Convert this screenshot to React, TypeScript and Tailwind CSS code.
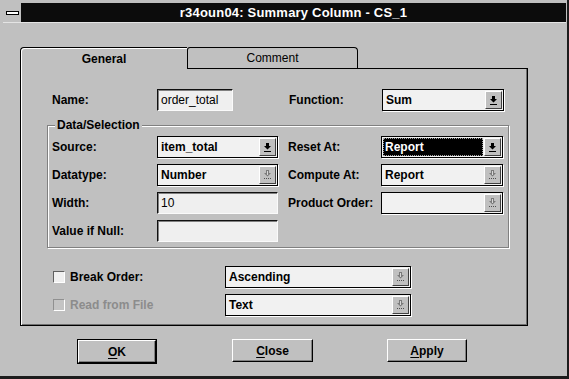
import React from 'react';

// Dropdown arrow glyph; gray + dotted when the combo is disabled
const Arrow: React.FC<{ enabled: boolean }> = ({ enabled }) =>
  enabled ? (
    <svg width="7" height="9" viewBox="0 0 7 9">
      <path d="M2 0h3v3h2L3.5 6.5 0 3h2z" fill="#000" />
      <rect x="0" y="8" width="7" height="1" fill="#000" />
    </svg>
  ) : (
    <svg width="7" height="10" viewBox="0 0 7 10">
      <path d="M2 0h3v3h2L3.5 6.5 0 3h2z" fill="#7a7a7a" />
      <path d="M3 1h1v4h-1z" fill="#d8d8d8" />
      <rect x="0" y="8" width="1" height="1" fill="#505050" />
      <rect x="2" y="8" width="1" height="1" fill="#505050" />
      <rect x="4" y="8" width="1" height="1" fill="#505050" />
      <rect x="6" y="8" width="1" height="1" fill="#505050" />
    </svg>
  );

interface ComboProps {
  value?: string;
  width: string;
  enabled?: boolean;
  selected?: boolean;
}

const Combo: React.FC<ComboProps> = ({ value = '', width, enabled = true, selected = false }) => (
  <div className={`flex h-[22px] border border-black bg-[#f1f1f1] shadow-[1px_1px_0_#ffffff] ${width}`}>
    {selected ? (
      <div className="flex-1 m-[1px] flex items-center pl-[1px] bg-black text-white border border-dotted border-[#a0a0a0] text-[12px] font-bold">
        {value}
      </div>
    ) : (
      <div className="flex-1 flex items-center pl-[3px] text-[12px] font-bold">{value}</div>
    )}
    <div className="w-[17px] my-px mr-px flex items-center justify-center bg-[#c0c0c0] border-t border-l border-t-white border-l-white border-b border-r border-b-[#404040] border-r-[#404040]">
      <Arrow enabled={enabled} />
    </div>
  </div>
);

const Field: React.FC<{ value?: string; width: string; bold?: boolean }> = ({ value = '', width, bold }) => (
  <div
    className={`h-[22px] flex items-center pl-[3px] bg-[#efefef] border-t border-l border-t-[#101010] border-l-[#101010] border-b border-r border-b-[#fafafa] border-r-[#fafafa] shadow-[inset_1px_1px_0_#808080] text-[12px] ${bold ? 'font-bold' : ''} ${width}`}
  >
    {value}
  </div>
);

const Label: React.FC<{ children: React.ReactNode; width: string }> = ({ children, width }) => (
  <div className={`text-[12px] font-bold ${width}`}>{children}</div>
);

const Check: React.FC<{ label: string; disabled?: boolean }> = ({ label, disabled }) => (
  <div className="flex items-center w-[172px]">
    <div
      className={`w-[12px] h-[12px] border-t border-l border-b border-r border-b-white border-r-white ${
        disabled ? 'bg-[#c4c4c4] border-t-[#909090] border-l-[#909090]' : 'bg-[#f0f0f0] border-t-[#606060] border-l-[#606060]'
      }`}
    />
    <span className={`ml-[5px] text-[12px] font-bold ${disabled ? 'text-[#8c8c8c]' : 'text-black'}`}>{label}</span>
  </div>
);

const Btn: React.FC<{ first: string; rest: string; width: string }> = ({ first, rest, width }) => (
  <div
    className={`h-[23px] flex items-center justify-center bg-[#c0c0c0] border-t border-l border-t-white border-l-white border-b border-r border-b-black border-r-black shadow-[inset_-1px_-1px_0_#808080] text-[12px] font-bold ${width}`}
  >
    <span>
      <span className="underline underline-offset-2">{first}</span>
      {rest}
    </span>
  </div>
);

export default function App() {
  return (
    <div className="w-[569px] h-[379px] bg-[#c0c0c0] flex flex-col pt-[3px] pl-[3px] pr-px border-r-2 border-b-[3px] border-r-[#1c1c1c] border-b-[#1c1c1c] text-black font-['Liberation_Sans',Arial,sans-serif] overflow-hidden">
      {/* Title bar */}
      <div className="flex h-[19px]">
        <div className="w-[18px] flex items-center justify-center bg-[#c0c0c0]">
          <div className="w-[13px] h-[4px] bg-white border border-black" />
        </div>
        <div className="flex-1 bg-[#0c0c0c] flex items-center justify-center text-white text-[13px] font-bold tracking-[0.2px]">
          r34oun04: Summary Column - CS_1
        </div>
      </div>
      <div className="h-px bg-[#e4e4e4]" />

      {/* Tabs */}
      <div className="flex items-end h-[21px] mt-[24px] ml-[17px]">
        <div className="relative z-10 w-[167px] h-[22px] -mb-px flex items-center justify-center bg-[#c0c0c0] border-t border-l border-black rounded-tl-[4px] shadow-[inset_1px_1px_0_#ffffff] text-[12px] font-bold">
          General
        </div>
        <div className="w-[171px] h-[21px] flex items-center justify-center bg-[#c0c0c0] border-t border-l border-r border-black rounded-tr-[4px] rounded-tl-[3px] text-[12px]">
          Comment
        </div>
      </div>

      {/* Tab panel */}
      <div className="ml-[17px] w-[508px] h-[258px] flex flex-col border-t border-l border-black border-r border-b shadow-[inset_1px_0_0_#ffffff,inset_-1px_-1px_0_#707070]">
        <div className="flex items-center h-[22px] mt-[20px] pl-[31px]">
          <Label width="w-[105px]">Name:</Label>
          <Field value="order_total" width="w-[76px]" />
          <Label width="w-[93px] ml-[56px]">Function:</Label>
          <Combo value="Sum" width="w-[122px]" />
        </div>

        {/* Data/Selection group */}
        <div className="mt-[14px] ml-[26px] w-[462px] h-[123px] flex flex-col border border-[#808080] shadow-[1px_1px_0_#ffffff,inset_1px_1px_0_#ffffff]">
          <div className="-mt-[8px] ml-[7px] px-[2px] w-fit bg-[#c0c0c0] text-[12px] font-bold leading-[14px]">Data/Selection</div>
          <div className="flex flex-col gap-[6px] mt-[4px] pl-[4px]">
            <div className="flex items-center">
              <Label width="w-[105px]">Source:</Label>
              <Combo value="item_total" width="w-[121px]" />
              <Label width="w-[93px] ml-[10px]">Reset At:</Label>
              <Combo value="Report" width="w-[122px]" selected />
            </div>
            <div className="flex items-center">
              <Label width="w-[105px]">Datatype:</Label>
              <Combo value="Number" width="w-[121px]" enabled={false} />
              <Label width="w-[93px] ml-[10px]">Compute At:</Label>
              <Combo value="Report" width="w-[122px]" enabled={false} />
            </div>
            <div className="flex items-center">
              <Label width="w-[105px]">Width:</Label>
              <Field value="10" width="w-[121px]" />
              <Label width="w-[93px] ml-[10px]">Product Order:</Label>
              <Combo width="w-[122px]" enabled={false} />
            </div>
            <div className="flex items-center">
              <Label width="w-[105px]">Value if Null:</Label>
              <Field width="w-[121px]" />
            </div>
          </div>
        </div>

        <div className="flex items-center mt-[18px] pl-[32px]">
          <Check label="Break Order:" />
          <Combo value="Ascending" width="w-[186px]" enabled={false} />
        </div>
        <div className="flex items-center mt-[6px] pl-[32px]">
          <Check label="Read from File" disabled />
          <Combo value="Text" width="w-[186px]" enabled={false} />
        </div>
      </div>

      {/* Buttons */}
      <div className="flex mt-[13px] ml-[74px]">
        <div className="border border-black">
          <Btn first="O" rest="K" width="w-[78px]" />
        </div>
        <Btn first="C" rest="lose" width="w-[81px] ml-[75px]" />
        <Btn first="A" rest="pply" width="w-[80px] ml-[74px]" />
      </div>
    </div>
  );
}
